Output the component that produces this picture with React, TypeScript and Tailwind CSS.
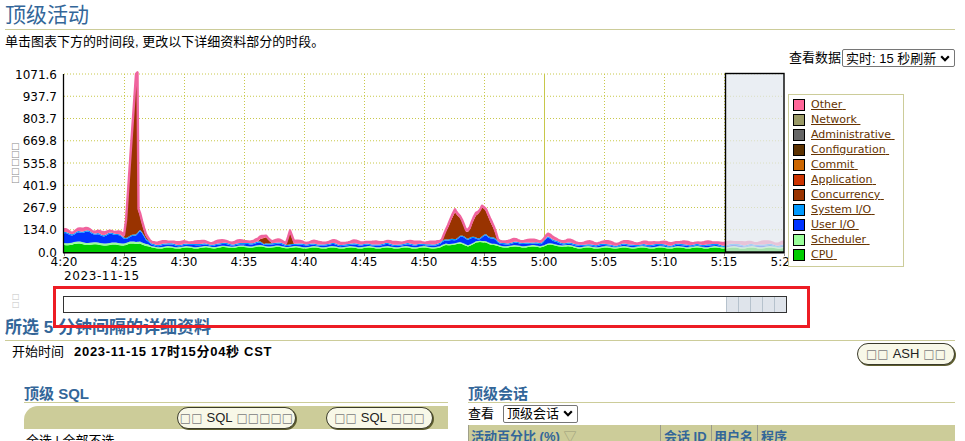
import React from "react";

const X0 = 64;
const X1 = 784;
const Y0 = 252;

function lerp(pts: number[][]) {
  return (x: number) => {
    if (x <= pts[0][0]) return pts[0][1];
    for (let i = 1; i < pts.length; i++) {
      const [x2, y2] = pts[i];
      if (x <= x2) {
        const [x1, y1] = pts[i - 1];
        return y1 + ((y2 - y1) * (x - x1)) / (x2 - x1);
      }
    }
    return pts[pts.length - 1][1];
  };
}

// stacked layer heights in px, bottom first
const cpu = lerp([[64, 7], [80, 8], [100, 7], [124, 7], [130, 8], [136, 8], [140, 9], [146, 6], [152, 4], [200, 4], [260, 5], [300, 4], [440, 4], [446, 7], [460, 8], [468, 6], [476, 9], [486, 10], [492, 7], [500, 5], [540, 5], [548, 7], [560, 6], [580, 4], [784, 4]]);
const userio = lerp([[64, 9], [75, 9], [85, 10], [95, 8], [105, 9], [115, 7], [124, 6], [130, 5], [136, 7], [140, 9], [146, 4], [152, 1.5], [250, 1.5], [262, 3], [270, 1.5], [440, 1.5], [446, 4], [470, 5], [480, 3], [486, 6], [494, 3], [500, 2], [540, 2], [548, 4], [556, 3], [566, 1], [784, 1]]);
const conc = lerp([[64, 0], [124, 0], [126, 15], [136, 158], [137.5, 158], [138.5, 20], [141, 10], [145, 3], [150, 0], [258, 0], [265, 7], [272, 0], [286, 0], [290, 12], [294, 0], [442, 0], [448, 12], [455, 27], [460, 18], [466, 6], [470, 8], [476, 22], [482, 29], [488, 20], [494, 8], [498, 0], [784, 0]]);

const layers: { color: string; h: (x: number) => number }[] = [
  { color: "#00cc00", h: (x) => Math.max(2, cpu(x) + 0.6 * Math.sin(x / 2.9)) },
  { color: "#99ff99", h: (x) => (x < 150 ? 2 : 1.3) },
  {
    color: "#0033ff",
    h: (x) => {
      const b = userio(x);
      const amp = b > 2.5 ? 1 : 0.35;
      return Math.max(0, b + amp * (1.2 * Math.sin(x / 4.3) + 0.8 * Math.sin(x / 1.7)));
    },
  },
  { color: "#0099ff", h: () => 1.2 },
  { color: "#993300", h: conc },
  { color: "#ff6699", h: (x) => 2.2 + 0.7 * Math.sin(x / 3.1) },
];

const xs: number[] = [];
for (let x = X0; x <= X1; x += 2) xs.push(x);
[136, 137.5, 138.5, 455, 482].forEach((k) => xs.push(k));
xs.sort((a, b) => a - b);

const stacks = (() => {
  const acc = xs.map(() => 0);
  return layers.map((l) => {
    const top = xs.map((x, i) => acc[i] + l.h(x));
    const pts =
      xs.map((x, i) => `${x},${(Y0 - top[i]).toFixed(1)}`).join(" ") +
      " " +
      xs
        .map((x, i) => [x, i] as const)
        .reverse()
        .map(([x, i]) => `${x},${(Y0 - acc[i]).toFixed(1)}`)
        .join(" ");
    top.forEach((t, i) => (acc[i] = t));
    return { color: l.color, pts, top: [...top] };
  });
})();

const topLine = xs
  .map((x, i) => `${x},${(Y0 - stacks[stacks.length - 1].top[i]).toFixed(1)}`)
  .join(" ");

const yLabels = ["1071.6", "937.7", "803.7", "669.8", "535.8", "401.9", "267.9", "134.0", "0.0"];
const xLabels = ["4:20", "4:25", "4:30", "4:35", "4:40", "4:45", "4:50", "4:55", "5:00", "5:05", "5:10", "5:15", "5:20"];

const legend = [
  ["Other", "#ff6699"],
  ["Network", "#999966"],
  ["Administrative", "#666666"],
  ["Configuration", "#5c3100"],
  ["Commit", "#cc6600"],
  ["Application", "#cc3300"],
  ["Concurrency", "#993300"],
  ["System I/O", "#0099ff"],
  ["User I/O", "#0033ff"],
  ["Scheduler", "#99ff99"],
  ["CPU", "#00cc00"],
];

function Chart() {
  return (
    <svg width={788} height={217} viewBox="0 67 788 217" className="shrink-0 font-['DejaVu_Sans',sans-serif]">
      {yLabels.map((v, i) => {
        const y = 74 + i * 22.25;
        return (
          <g key={v}>
            {i < 8 && <line x1={X0} x2={X1} y1={y} y2={y} stroke="#c8c84a" strokeDasharray="1 2" />}
            <text x={57} y={y + 4.5} fontSize={12} textAnchor="end" fill="#000">
              {v}
            </text>
          </g>
        );
      })}
      {xLabels.map((v, k) => {
        const x = X0 + k * 60;
        return (
          <g key={v}>
            {k > 0 && k < 12 && (
              <line x1={x + 0.5} x2={x + 0.5} y1={74} y2={252} stroke="#c8c84a" strokeDasharray={k === 8 ? undefined : "1 2"} />
            )}
            <line x1={x + 0.5} x2={x + 0.5} y1={252} y2={256} stroke="#888" />
            <text x={x} y={266} fontSize={12} textAnchor="middle">
              {v}
            </text>
          </g>
        );
      })}
      <text x={64} y={280} fontSize={12} letterSpacing={0.6}>
        2023-11-15
      </text>
      {["□", "□", "□", "□", "□"].map((c, i) => (
        <text key={i} x={11} y={149 + i * 8.2} fontSize={9} fill="#8a8a8a">
          {c}
        </text>
      ))}
      {stacks.map((s) => (
        <polygon key={s.color} points={s.pts} fill={s.color} />
      ))}
      <polyline points={topLine} fill="none" stroke="#f0649e" strokeWidth={2.4} strokeLinejoin="round" />
      <rect x={725.5} y={73.5} width={58.5} height={178.5} fill="#e2e7ee" fillOpacity={0.72} stroke="#000" strokeWidth={1.4} />
      <line x1={63.5} x2={63.5} y1={74} y2={253} stroke="#000" strokeWidth={1.3} />
      <line x1={63} x2={X1} y1={252.7} y2={252.7} stroke="#000" strokeWidth={1.6} />
    </svg>
  );
}

function Tofu({ n }: { n: number }) {
  return <span className="font-['DejaVu_Sans',sans-serif] text-[#808080] text-[12px]">{"□".repeat(n)}</span>;
}

function PillButton({ children, w }: { children: React.ReactNode; w: string }) {
  return (
    <div
      className={`${w} h-[22px] rounded-full border border-[#3b3b2b] bg-[#f8f8e8] shadow-[1px_1px_0_#5e5e2e] flex items-center justify-center gap-[4px] text-[13px] text-[#222]`}
    >
      {children}
    </div>
  );
}

function FakeSelect({ label, w }: { label: string; w: string }) {
  return (
    <div className={`${w} h-[18px] border border-[#767676] rounded-[2px] bg-white flex items-center justify-between pl-[3px] pr-[4px] text-[13px] leading-none text-black`}>
      <span>{label}</span>
      <svg width="10" height="7" viewBox="0 0 10 7">
        <path d="M1.2 1.3 5 5.2 8.8 1.3" fill="none" stroke="#000" strokeWidth={2.2} />
      </svg>
    </div>
  );
}

export default function App() {
  return (
    <div className="relative w-[965px] h-[441px] overflow-hidden bg-white font-['Liberation_Sans','Noto_Sans_CJK_SC',sans-serif] text-black">
      <div className="pl-[5px] pr-[10px]">
        <div className="h-[30px] leading-[29px] text-[21px] text-[#336699] border-b border-[#cccc99]">顶级活动</div>
        <div className="mt-[4px] h-[15px] leading-[15px] text-[13px]">单击图表下方的时间段, 更改以下详细资料部分的时段。</div>
        <div className="h-[18px] flex justify-end items-center gap-[1px] text-[13px]">
          <span>查看数据</span>
          <FakeSelect label="实时: 15 秒刷新" w="w-[113px]" />
        </div>
      </div>

      {/* chart + legend */}
      <div className="flex items-start">
        <Chart />
        <div className="mt-[27px] w-[116px] h-[173px] border border-[#cccc99] pt-[2px] pl-[4px] font-['DejaVu_Sans',sans-serif] text-[11px]">
          {legend.map(([name, color]) => (
            <div key={name} className="h-[15px] flex items-center gap-[6px]">
              <span className="w-[12px] h-[12px] border border-black" style={{ backgroundColor: color }} />
              <span className="underline text-[#663300] leading-none">{name}&nbsp;</span>
            </div>
          ))}
        </div>
      </div>

      {/* time slider */}
      <div className="mt-[12px] flex items-start">
        <div className="w-[63px] pl-[12px] -mt-[3px] flex flex-col leading-[8px] text-[8px] text-[#c4c4c4] font-['DejaVu_Sans',sans-serif]">
          <span>□</span>
          <span>□</span>
        </div>
        <div className="w-[724px] h-[17px] border border-[#333] bg-white flex justify-end">
          {[0, 1, 2, 3, 4].map((i) => (
            <div key={i} className="w-[12px] h-full bg-[#dfe4eb] border-l border-[#b6c2cd]" />
          ))}
        </div>
      </div>

      <div className="pl-[5px] pr-[10px]">
        <div className="pt-[5px] pb-[2px] leading-[20px] text-[17px] font-bold text-[#336699] border-b border-[#cccc99]">
          所选 5 分钟间隔的详细资料
        </div>
        <div className="mt-[2px] h-[22px] flex justify-between items-start">
          <div className="pl-[7px] leading-[18px] text-[13px]">
            开始时间<span className="ml-[10px] font-bold tracking-[0.7px]">2023-11-15 17时15分04秒 CST</span>
          </div>
          <PillButton w="w-[98px]">
            <Tofu n={2} />
            <span>ASH</span>
            <Tofu n={2} />
          </PillButton>
        </div>

        <div className="mt-[20px] ml-[19px] flex gap-[20px]">
          {/* Top SQL */}
          <div className="w-[424px]">
            <div className="h-[18px] leading-[17px] text-[15px] font-bold text-[#336699] border-b border-[#cccc99]">顶级 SQL</div>
            <div className="mt-[3px] h-[23px] bg-[#cccc99] rounded-tl-[14px] flex items-center justify-end gap-[30px] pr-[15px]">
              <PillButton w="w-[119px]">
                <Tofu n={2} />
                <span>SQL</span>
                <Tofu n={5} />
              </PillButton>
              <PillButton w="w-[107px]">
                <Tofu n={2} />
                <span>SQL</span>
                <Tofu n={3} />
              </PillButton>
            </div>
            <div className="mt-[4px] pl-[2px] text-[13px] leading-[16px]">全选 | 全部不选</div>
          </div>

          {/* Top sessions */}
          <div className="w-[487px]">
            <div className="h-[18px] leading-[17px] text-[15px] font-bold text-[#336699] border-b border-[#cccc99]">顶级会话</div>
            <div className="h-[21px] flex items-center gap-[9px] text-[13px]">
              <span>查看</span>
              <FakeSelect label="顶级会话" w="w-[75px]" />
            </div>
            <div className="mt-[1px] h-[24px] bg-[#cccc99] border-l border-[#a0a08a] flex text-[13px] font-bold text-[#336699] leading-[16px]">
              <div className="w-[192px] pt-[4px] pl-[2px] border-r border-[#9a9a8a]">
                活动百分比 (%) <span className="font-normal text-[#9a9a7a]">▽</span>
              </div>
              <div className="w-[51px] pt-[4px] pl-[3px] border-r border-[#9a9a8a]">会话 ID</div>
              <div className="w-[46px] pt-[4px] pl-[2px] border-r border-[#9a9a8a]">用户名</div>
              <div className="flex-1 pt-[4px] pl-[3px]">程序</div>
            </div>
          </div>
        </div>
      </div>

      {/* red annotation box over the slider */}
      <div className="absolute left-[53px] top-[286px] w-[757px] h-[42px] border-[3px] border-[#ed1c24]" />
    </div>
  );
}
